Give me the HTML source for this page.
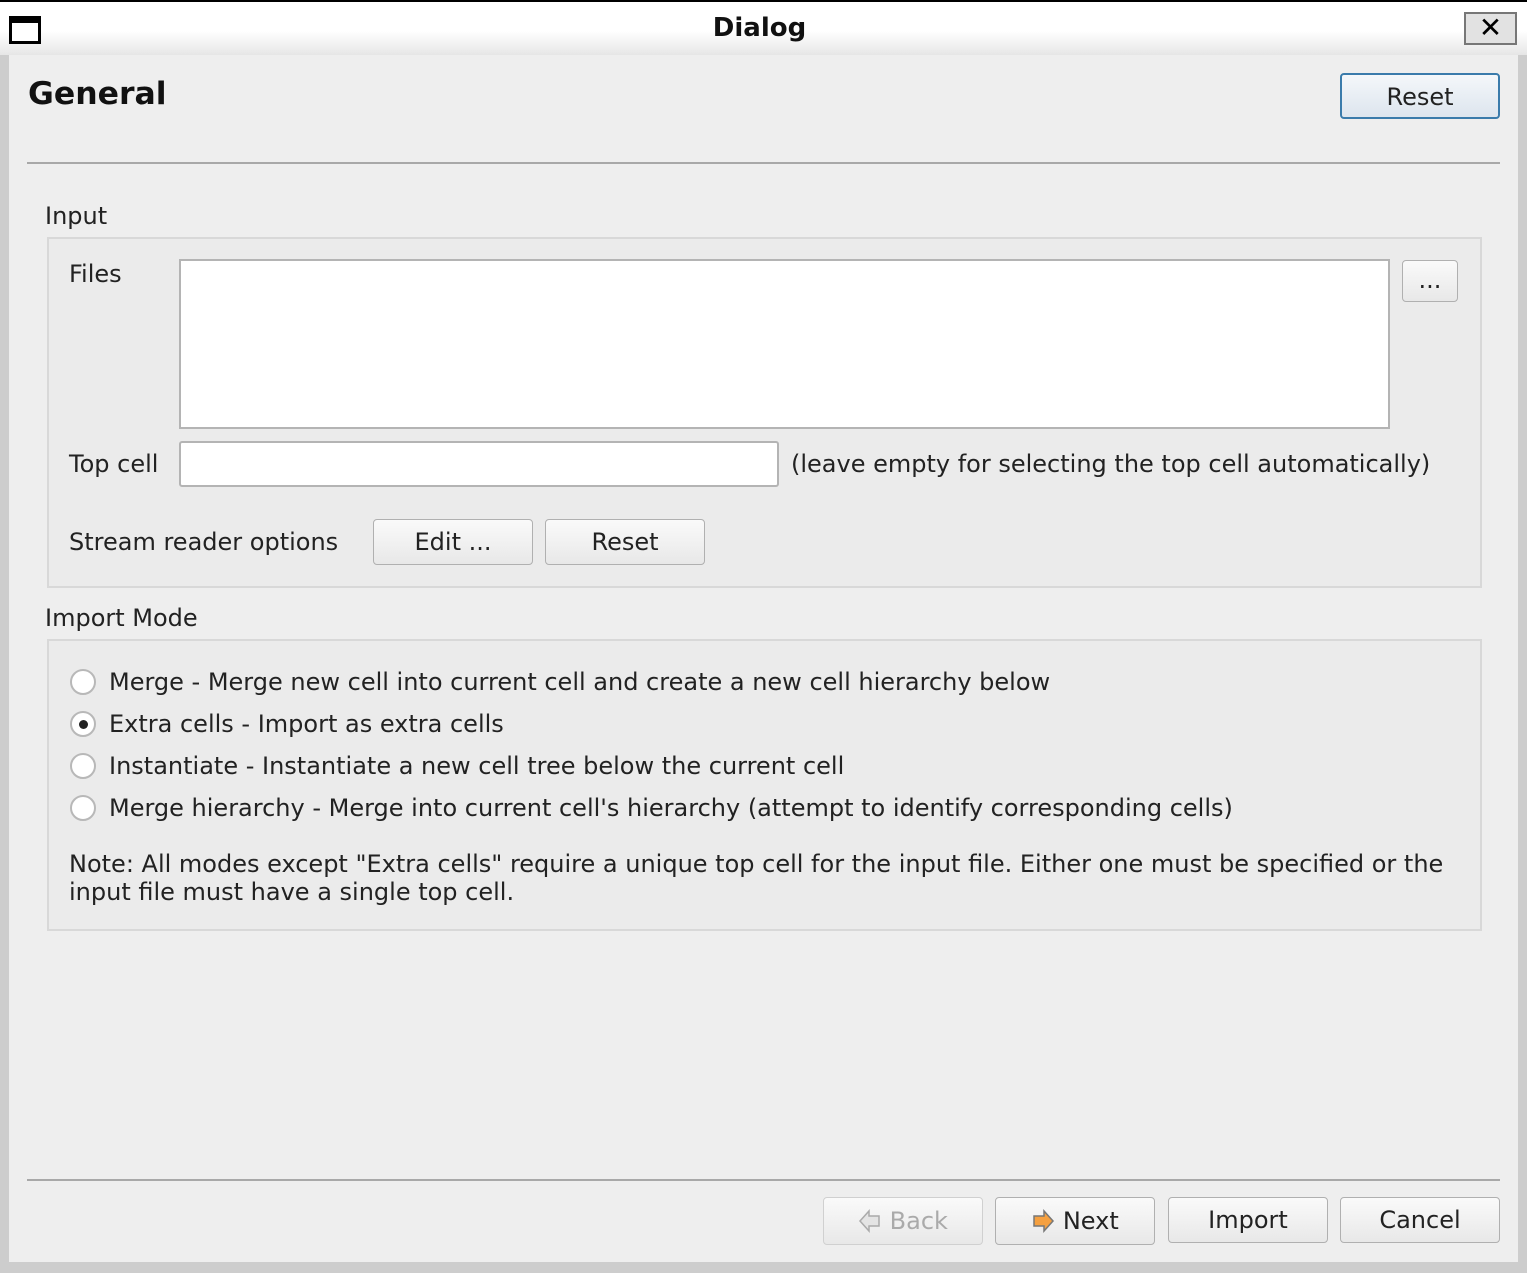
<!DOCTYPE html>
<html><head><meta charset="utf-8"><style>
*{box-sizing:border-box;margin:0;padding:0}
body{width:1527px;height:1273px;background:#cdcdcd;font-family:"DejaVu Sans","Liberation Sans",sans-serif;font-size:24px;color:#222;position:relative;overflow:hidden}
.a{position:absolute}
.title{left:0;top:0;width:1527px;height:55px;background:linear-gradient(#fff 0%,#fff 55%,#e6e6e6 100%);border-top:2px solid #000}
.content{left:9px;top:55px;width:1509px;height:1207px;background:#eeeeee}
.btn{position:absolute;border:1px solid #b0b0b0;border-radius:4px;background:linear-gradient(#fafafa,#e8e8e8);text-align:center;color:#222;font-size:24px}
.grp{position:absolute;border:2px solid #d8d8d8;background:#ebebeb}
.inp{position:absolute;background:#fff;border:2px solid #b4b4b4}
.radio{position:absolute;width:26px;height:26px;border-radius:50%;border:2px solid #b8b8b8;background:#fff}
.t{position:absolute;white-space:nowrap}
</style></head><body>
<div class="a title"></div>
<div class="a" style="left:9px;top:16px;width:32px;height:28px;border:3px solid #000;border-top-width:7px;background:#fff"></div>
<div class="t" style="left:-4px;width:1527px;text-align:center;top:13px;font-weight:bold;font-size:26px;color:#111">Dialog</div>
<div class="a" style="left:1464px;top:12px;width:53px;height:33px;border:2px solid #777;background:#e2e2e2;text-align:center;font-size:28px;font-weight:bold;line-height:28px;color:#000">✕</div>
<div class="a content"></div>
<div class="t" style="left:28px;top:76px;font-weight:bold;font-size:31.5px;color:#111">General</div>
<div class="btn" style="left:1340px;top:73px;width:160px;height:46px;line-height:44px;border:2px solid #3a7bab;background:linear-gradient(#f4f7fa,#dde5ee)">Reset</div>
<div class="a" style="left:27px;top:162px;width:1473px;height:2px;background:#a8a8a8"></div>
<div class="t" style="left:45px;top:202px">Input</div>
<div class="grp" style="left:47px;top:237px;width:1435px;height:351px"></div>
<div class="t" style="left:69px;top:260px">Files</div>
<div class="inp" style="left:179px;top:259px;width:1211px;height:170px"></div>
<div class="btn" style="left:1402px;top:260px;width:56px;height:42px;line-height:38px">...</div>
<div class="t" style="left:69px;top:450px">Top cell</div>
<div class="inp" style="left:179px;top:441px;width:600px;height:46px;border-radius:3px"></div>
<div class="t" style="left:791px;top:450px">(leave empty for selecting the top cell automatically)</div>
<div class="t" style="left:69px;top:528px">Stream reader options</div>
<div class="btn" style="left:373px;top:519px;width:160px;height:46px;line-height:44px">Edit ...</div>
<div class="btn" style="left:545px;top:519px;width:160px;height:46px;line-height:44px">Reset</div>
<div class="t" style="left:45px;top:604px">Import Mode</div>
<div class="grp" style="left:47px;top:639px;width:1435px;height:292px"></div>
<div class="radio" style="left:70px;top:669px"></div>
<div class="t" style="left:109px;top:668px">Merge - Merge new cell into current cell and create a new cell hierarchy below</div>
<div class="radio" style="left:70px;top:711px"><div class="a" style="left:7px;top:7px;width:9px;height:9px;border-radius:50%;background:#222"></div></div>
<div class="t" style="left:109px;top:710px">Extra cells - Import as extra cells</div>
<div class="radio" style="left:70px;top:753px"></div>
<div class="t" style="left:109px;top:752px">Instantiate - Instantiate a new cell tree below the current cell</div>
<div class="radio" style="left:70px;top:795px"></div>
<div class="t" style="left:109px;top:794px">Merge hierarchy - Merge into current cell's hierarchy (attempt to identify corresponding cells)</div>
<div class="t" style="left:69px;top:850px;line-height:28px">Note: All modes except "Extra cells" require a unique top cell for the input file. Either one must be specified or the<br>input file must have a single top cell.</div>
<div class="a" style="left:27px;top:1179px;width:1473px;height:2px;background:#a8a8a8"></div>
<div class="btn" style="left:823px;top:1197px;width:160px;height:48px;line-height:46px;color:#aaa;border-color:#d0d0d0"><svg width="24" height="26" viewBox="0 0 24 26" style="vertical-align:-5px"><path d="M2 13 L11 3 V8 H21 V18 H11 V23 Z" fill="#e4e4e4" stroke="#aaa" stroke-width="1.5"/></svg> Back</div>
<div class="btn" style="left:995px;top:1197px;width:160px;height:48px;line-height:46px"><svg width="24" height="26" viewBox="0 0 24 26" style="vertical-align:-5px"><path d="M22 13 L13 3 V8 H3 V18 H13 V23 Z" fill="#f5a040" stroke="#777" stroke-width="1.5"/></svg> Next</div>
<div class="btn" style="left:1168px;top:1197px;width:160px;height:46px;line-height:44px">Import</div>
<div class="btn" style="left:1340px;top:1197px;width:160px;height:46px;line-height:44px">Cancel</div>
</body></html>
